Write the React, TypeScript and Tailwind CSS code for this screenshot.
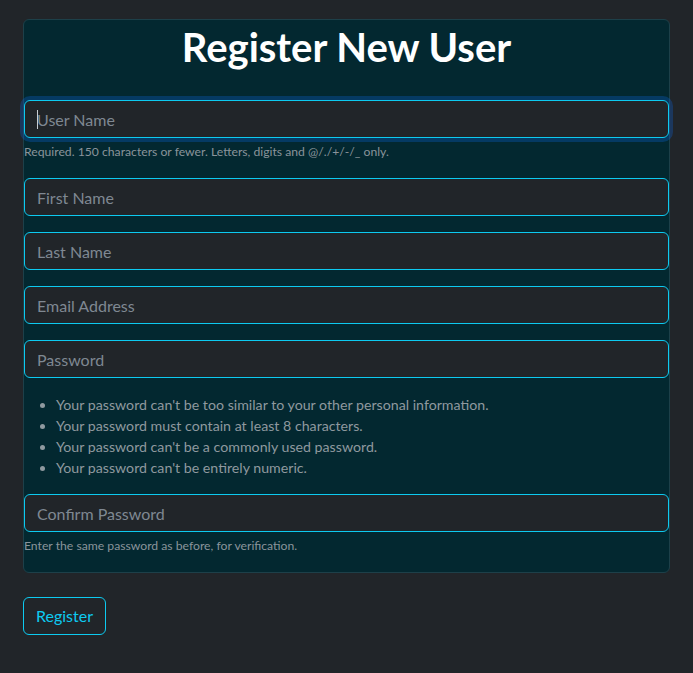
import React from "react";

const font = { fontFamily: "Lato, 'Noto Sans', sans-serif" };

function Field({
  placeholder,
  type = "text",
  focused = false,
}: {
  placeholder: string;
  type?: string;
  focused?: boolean;
}) {
  return (
    <div className="relative">
      <input
        type={type}
        placeholder={placeholder}
        className={
          "block h-[38px] w-full rounded-[6px] border border-[#0dcaf0] bg-[#212529] px-3 text-[16px] text-[#dee2e6] outline-none placeholder:text-[#7f8892] " +
          (focused ? "shadow-[0_0_0_4px_rgba(13,110,253,0.25)]" : "")
        }
        style={font}
      />
      {focused && (
        <span className="pointer-events-none absolute left-[13px] top-[10px] h-[19px] w-px bg-[#c9ced3]" />
      )}
    </div>
  );
}

export default function App() {
  return (
    <div className="min-h-screen bg-[#212529] px-[23px] pt-[19px]" style={font}>
      <div className="rounded-[6px] border border-[#1d4049] bg-[#032830] pt-[3px]">
        <h1 className="mb-[29px] text-center text-[40px] font-bold leading-[48px] text-white">
          Register New User
        </h1>
        <div className="mb-4">
          <Field placeholder="User Name" focused />
          <div className="mt-1 text-[12.2px] leading-[20px] text-[#8a949b]">
            Required. 150 characters or fewer. Letters, digits and @/./+/-/_ only.
          </div>
        </div>
        <div className="mb-4">
          <Field placeholder="First Name" />
        </div>
        <div className="mb-4">
          <Field placeholder="Last Name" />
        </div>
        <div className="mb-4">
          <Field placeholder="Email Address" type="email" />
        </div>
        <div className="mb-4">
          <Field placeholder="Password" type="password" />
          <ul className="mt-[16px] list-disc pl-8 text-[14.2px] leading-[21px] text-[#8f999f] marker:text-[#8f999f]">
            <li>Your password can't be too similar to your other personal information.</li>
            <li>Your password must contain at least 8 characters.</li>
            <li>Your password can't be a commonly used password.</li>
            <li>Your password can't be entirely numeric.</li>
          </ul>
        </div>
        <div className="mb-4">
          <Field placeholder="Confirm Password" type="password" />
          <div className="mt-1 text-[12.2px] leading-[20px] text-[#8a949b]">
            Enter the same password as before, for verification.
          </div>
        </div>
      </div>
      <button
        className="mt-[24px] h-[38px] rounded-[6px] border border-[#0dcaf0] px-3 text-[16px] text-[#0dcaf0]"
        style={font}
      >
        Register
      </button>
    </div>
  );
}
